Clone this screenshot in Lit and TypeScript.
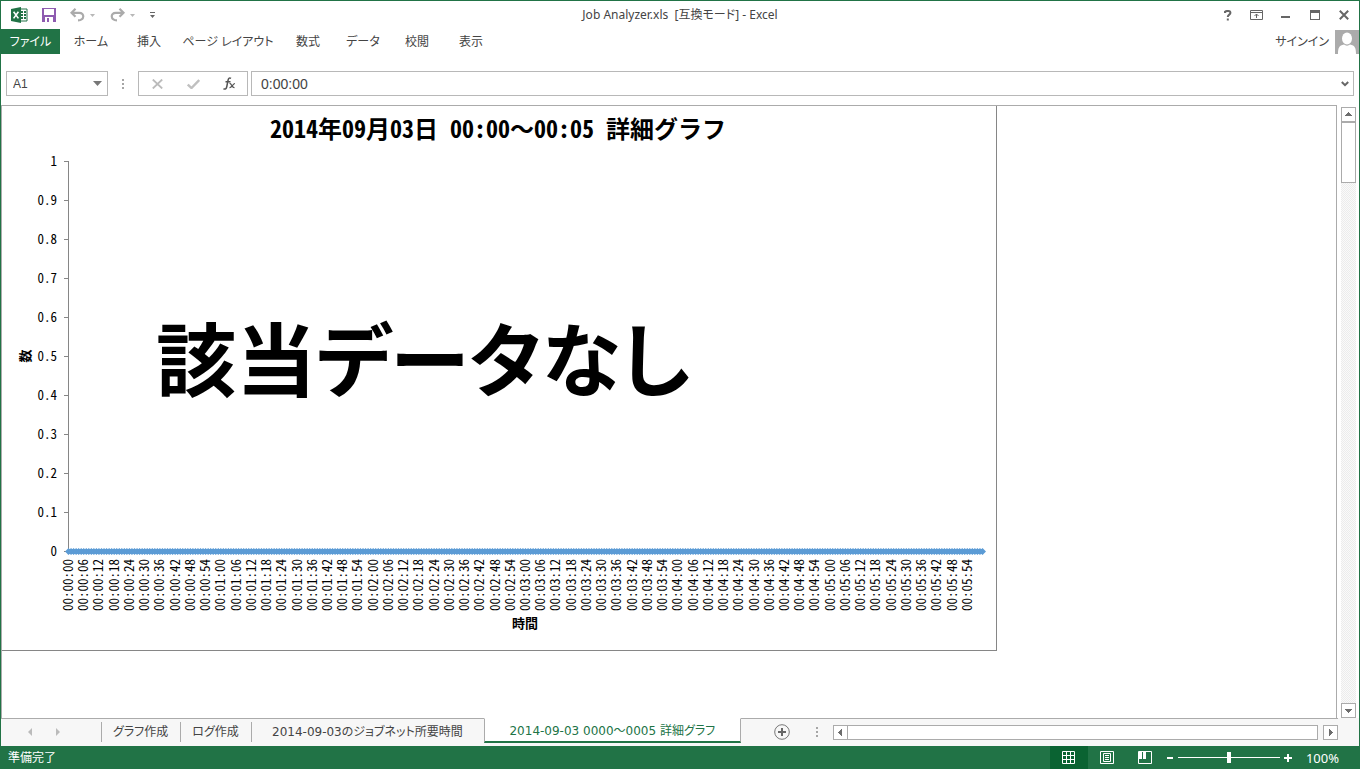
import { LitElement, html, css, svg } from "lit";
import { customElement, property, state } from "lit/decorators.js";
import { classMap } from "lit/directives/class-map.js";

const RIBBON_TABS = ["ホーム", "挿入", "ページ レイアウト", "数式", "データ", "校閲", "表示"];

const SHEETS = [
  { name: "グラフ作成", size: "small" },
  { name: "ログ作成", size: "small" },
  { name: "2014-09-03のジョブネット所要時間", size: "large" },
  { name: "2014-09-03 0000～0005 詳細グラフ", size: "large" },
];

const pad = (n: number) => String(n).padStart(2, "0");

/** Line chart of the job counts over a time range. */
@customElement("detail-chart")
class DetailChart extends LitElement {
  @property() heading = "";
  @property() message = "";

  static styles = css`
    :host {
      display: block;
      width: max-content;
      background: #fff;
      border-right: 1px solid #868686;
      border-bottom: 1px solid #868686;
    }
    svg {
      display: block;
      font-family: "Noto Sans CJK JP", sans-serif;
      fill: #000;
    }
    .title {
      font-size: 24px;
      font-weight: 700;
      font-feature-settings: "hwid";
    }
    .wide {
      font-feature-settings: normal;
    }
    .message {
      font-size: 80px;
      font-weight: 700;
      font-feature-settings: "palt";
    }
    .tick {
      font-size: 13px;
      font-feature-settings: "hwid";
    }
    .caption {
      font-size: 13px;
      font-weight: 700;
    }
    .axis {
      stroke: #868686;
      fill: none;
      shape-rendering: crispEdges;
    }
    .series {
      fill: #5b9bd5;
    }
  `;

  render() {
    const left = 66;
    const right = 980;
    const top = 55;
    const bottom = 445;
    const points = 360;
    const labels = 60;
    const step = (right - left) / labels;
    const levels = Array.from({ length: 11 }, (_, i) => i);
    const yOf = (i: number) => Math.round(bottom - ((bottom - top) * i) / 10) + 0.5;
    const ticks = levels.map((i) => `M${left - 4} ${yOf(i)}H${left + 1}`).join("");
    const diamonds = Array.from({ length: points + 1 }, (_, i) => {
      const x = left + 0.5 + ((right - left) * i) / points;
      return `M${x.toFixed(2)} ${bottom - 3}l3.5 3.5l-3.5 3.5l-3.5-3.5z`;
    }).join("");
    return html`
      <svg width="994" height="544" viewBox="0 0 994 544" role="img" aria-label=${this.heading}>
        <text class="title" x="496" y="32" text-anchor="middle">${this.heading
          .split(/(～)/)
          .map((part) => svg`<tspan class=${part === "～" ? "wide" : ""}>${part}</tspan>`)}</text>
        <path class="axis" d="M${left + 0.5} ${top}V${bottom}${ticks}" />
        ${levels.map(
          (i) => svg`<text class="tick" x="55" y=${yOf(i) + 4} text-anchor="end">${
            i === 0 ? "0" : i === 10 ? "1" : `0.${i}`
          }</text>`
        )}
        <path class="series" d=${diamonds} />
        ${Array.from({ length: labels }, (_, i) => {
          const seconds = i * 6;
          const x = Math.round(left + i * step);
          return svg`<text class="tick" transform="translate(${x + 5} 453) rotate(-90)" text-anchor="end">${
            `00:${pad(Math.floor(seconds / 60))}:${pad(seconds % 60)}`
          }</text>`;
        })}
        <text class="caption" transform="translate(28 250) rotate(-90)" text-anchor="middle">数</text>
        <text class="caption" x="523" y="522" text-anchor="middle">時間</text>
        <text class="message" x="154" y="284">${this.message}</text>
      </svg>
    `;
  }
}

@customElement("app-root")
class AppRoot extends LitElement {
  @state() private activeSheet = 3;
  @state() private view = 0;

  static styles = css`
    :host {
      display: flex;
      flex-direction: column;
      box-sizing: border-box;
      height: 100vh;
      border: 1px solid #217346;
      border-bottom: 0;
      background: #fff;
      color: #444;
      font-family: "Noto Sans", "Noto Sans CJK JP", sans-serif;
      font-size: 12px;
      line-height: 16px;
      font-feature-settings: "palt";
      overflow: hidden;
    }
    *,
    *::before {
      box-sizing: border-box;
    }
    button,
    input {
      margin: 0;
      padding: 0;
      border: 0;
      border-radius: 0;
      background: none;
      color: inherit;
      font: inherit;
      font-feature-settings: inherit;
      outline: none;
    }
    svg {
      display: block;
    }
    button {
      display: flex;
      align-items: center;
      justify-content: center;
    }

    .titlebar {
      display: grid;
      grid-template-columns: 1fr auto 1fr;
      align-items: center;
      height: 28px;
      flex: none;
    }
    .quick {
      display: flex;
      align-items: center;
      padding-left: 10px;
    }
    .quick .save {
      margin: 0 14px;
    }
    .quick .redo {
      margin: 0 14px;
    }
    .title {
      margin: 0;
      font-size: 12px;
      font-weight: 400;
      white-space: pre;
    }
    .window {
      display: flex;
      justify-content: flex-end;
      padding-right: 1px;
    }
    .window button {
      width: 29px;
      height: 28px;
    }

    .ribbon {
      display: flex;
      height: 25px;
      flex: none;
    }
    .tabs {
      display: grid;
      grid-template-columns: 59px 62px 54px 104px 56px 54px 54px 54px;
    }
    .tabs button {
      white-space: nowrap;
    }
    .tabs .file {
      background: #217346;
      color: #fff;
    }
    .account {
      display: flex;
      align-items: center;
      gap: 6px;
      margin-left: auto;
    }
    .account a {
      color: #444;
      text-decoration: none;
    }

    .formula {
      display: flex;
      align-items: center;
      height: 51px;
      padding: 8px 5px 0;
      flex: none;
      font-family: "Liberation Sans", sans-serif;
    }
    .box {
      display: flex;
      align-items: center;
      height: 25px;
      border: 1px solid #b8b8b8;
    }
    .namebox {
      width: 102px;
    }
    .namebox input {
      flex: 1;
      min-width: 0;
      padding-left: 6px;
    }
    .namebox button {
      width: 20px;
      height: 22px;
    }
    .grip {
      width: 30px;
      display: flex;
      justify-content: center;
    }
    .actions {
      width: 110px;
      margin-right: 3px;
    }
    .actions button {
      flex: 1;
      height: 22px;
    }
    .entry {
      flex: 1;
    }
    .entry input {
      flex: 1;
      min-width: 0;
      padding-left: 9px;
      font-size: 14px;
    }
    .entry button {
      width: 16px;
      height: 22px;
    }

    .work {
      display: flex;
      flex: 1;
      min-height: 0;
      background: #fff;
    }
    .sheet {
      flex: 1;
      min-width: 0;
      overflow: hidden;
      background: #fff;
      border: 1px solid #ababab;
      border-bottom: 0;
    }
    .vscroll {
      display: flex;
      flex-direction: column;
      width: 15px;
      margin: 2px 3px 0 4px;
    }
    .arrow {
      width: 15px;
      height: 15px;
      flex: none;
      background: #fff;
      border: 1px solid #ababab;
    }
    .track {
      flex: 1;
      background: repeating-conic-gradient(#ececec 0 25%, #fafafa 0 50%) 0 0 / 2px 2px;
    }
    .thumb {
      height: 61px;
      background: #fff;
      border: 1px solid #ababab;
    }

    .sheetbar {
      display: flex;
      height: 28px;
      flex: none;
      background: #f7f7f7;
    }
    .nav {
      display: flex;
      align-items: center;
      width: 100px;
      height: 26px;
      padding-left: 15px;
      border-top: 1px solid #ababab;
    }
    .nav button {
      width: 28px;
      height: 20px;
    }
    .sheets {
      display: flex;
      font-size: 12px;
    }
    .sheets button {
      height: 26px;
      position: relative;
      border-top: 1px solid #ababab;
      white-space: nowrap;
    }
    .sheets .small {
      padding: 0 12px;
    }
    .sheets .large {
      min-width: 233px;
      padding: 0 16px;
      font-family: "DejaVu Sans", "Noto Sans CJK JP", sans-serif;
    }
    .sheets .divided::before {
      content: "";
      position: absolute;
      left: 0;
      top: 3px;
      bottom: 2px;
      border-left: 1px solid #ababab;
    }
    .sheets .active {
      height: 25px;
      min-width: 257px;
      padding-top: 2px;
      background: #fff;
      color: #217346;
      border: 1px solid #ababab;
      border-top-color: #fff;
      border-bottom: 2px solid #217346;
    }
    .rest {
      display: flex;
      align-items: center;
      flex: 1;
      height: 27px;
      padding-left: 12px;
      border-top: 1px solid #ababab;
    }
    .rest .add {
      width: 58px;
      height: 26px;
    }
    .rest .grip {
      width: 12px;
    }
    .hscroll {
      display: flex;
      flex: 1;
      margin-left: 10px;
    }
    .hthumb {
      flex: 1;
      height: 15px;
      margin: 0 5px 0 0;
      background: #fff;
      border: 1px solid #ababab;
      border-left: 0;
    }
    .corner {
      width: 21px;
    }

    .status {
      display: flex;
      align-items: center;
      height: 23px;
      padding: 0 20px 0 7px;
      flex: none;
      background: #217346;
      color: #fff;
    }
    .views {
      display: flex;
      margin-left: auto;
    }
    .views button {
      width: 38px;
      height: 23px;
    }
    .views .on {
      background: #0a6332;
    }
    .zoom {
      display: flex;
      align-items: center;
      gap: 2px;
    }
    .zoom button {
      width: 12px;
      height: 20px;
    }
    .zoom input {
      appearance: none;
      width: 102px;
      height: 12px;
      background: linear-gradient(#fff, #fff) center / 100% 1px no-repeat;
    }
    .zoom input::-webkit-slider-thumb {
      appearance: none;
      width: 4px;
      height: 11px;
      background: #fff;
    }
    .percent {
      margin-left: 11px;
      width: 34px;
      font-size: 13px;
      text-align: right;
    }
  `;

  private caret(color: string) {
    return html`<svg width="9" height="5" viewBox="0 0 9 5"><path d="M0 0h9L4.500 5z" fill=${color} /></svg>`;
  }

  private grip() {
    return html`<span class="grip"
      ><svg width="2" height="10" viewBox="0 0 2 10" fill="#a6a6a6">
        <path d="M0 0h2v2H0zM0 4h2v2H0zM0 8h2v2H0z" /></svg
    ></span>`;
  }

  private arrow(label: string, d: string) {
    return html`<button class="arrow" aria-label=${label}>
      <svg width="9" height="9" viewBox="0 0 9 9" fill="#6d6d6d" shape-rendering="crispEdges"><path d=${d} /></svg>
    </button>`;
  }

  private renderTitleBar() {
    return html`
      <header class="titlebar">
        <div class="quick">
          <svg width="17" height="16" viewBox="0 0 17 16" role="img" aria-label="Excel">
            <path d="M9 2h7v12H9z" fill="#fff" stroke="#217346" />
            <path d="M10 4h2v2h-2zM13 4h2v2h-2zM10 7h2v2h-2zM13 7h2v2h-2zM10 10h2v2h-2zM13 10h2v2h-2z" fill="#217346" />
            <path d="M0 2l10-2v16L0 14z" fill="#217346" />
            <path d="M2.6 4.8l4.8 6.6M7.4 4.8l-4.8 6.6" stroke="#fff" stroke-width="1.6" />
          </svg>
          <button class="save" aria-label="上書き保存">
            <svg width="14" height="14" viewBox="0 0 14 14">
              <path d="M0 0h14v14H0z" fill="#8e5bb0" />
              <path d="M2 1h10v6H2zM3 9h8v5H3z" fill="#fff" />
              <path d="M5 10h2v4H5z" fill="#8e5bb0" />
            </svg>
          </button>
          <button aria-label="元に戻す">
            <svg width="26" height="14" viewBox="0 0 26 14">
              <path d="M5.5 0.8L1.5 4.8l4 4M2 4.8h7.2c5.6 0 5.6 7.4-1.2 7.6" fill="none" stroke="#ababab" stroke-width="2.2" />
              <path d="M20 6h5l-2.500 3z" fill="#b8b8b8" />
            </svg>
          </button>
          <button class="redo" aria-label="やり直し">
            <svg width="26" height="14" viewBox="0 0 26 14">
              <path d="M9.500 0.800l4 4-4 4M13 4.800H5.800c-5.600 0-5.600 7.400 1.200 7.600" fill="none" stroke="#ababab" stroke-width="2.2" />
              <path d="M20 6h5l-2.500 3z" fill="#b8b8b8" />
            </svg>
          </button>
          <button aria-label="クイック アクセス ツール バーのユーザー設定">
            <svg width="5" height="6" viewBox="0 0 5 6" fill="#666"><path d="M0 0h5v1H0zM0 3h5L2.500 6z" /></svg>
          </button>
        </div>
        <h1 class="title">Job Analyzer.xls  [互換モード] - Excel</h1>
        <div class="window">
          <button aria-label="ヘルプ">
            <svg width="8" height="11" viewBox="0 0 8 11">
              <path d="M1 3V1.800C2.500 0.600 6.600 0.500 6.400 3c0 1.700-2.600 1.600-2.600 4" fill="none" stroke="#666" stroke-width="2" />
              <path d="M2.800 8.500h2v2h-2z" fill="#666" />
            </svg>
          </button>
          <button aria-label="リボンの表示オプション">
            <svg width="13" height="10" viewBox="0 0 13 10" fill="none" stroke="#666">
              <path d="M.5.5h12v9H.5zM.5 2.500h12M6.500 8V4M4.500 6l2-2 2 2" />
            </svg>
          </button>
          <button aria-label="最小化">
            <svg width="9" height="10" viewBox="0 0 9 10"><path d="M0 6h9v2H0z" fill="#666" /></svg>
          </button>
          <button aria-label="最大化">
            <svg width="10" height="10" viewBox="0 0 10 10"><path d="M0 0h10v10H0zM1 3v6h8V3z" fill="#666" fill-rule="evenodd" /></svg>
          </button>
          <button aria-label="閉じる">
            <svg width="10" height="10" viewBox="0 0 10 10"><path d="M.8.8l8.400 8.400M9.200.8L.8 9.200" stroke="#666" stroke-width="2" /></svg>
          </button>
        </div>
      </header>
    `;
  }

  private renderRibbon() {
    return html`
      <nav class="ribbon">
        <div class="tabs">
          <button class="file">ファイル</button>
          ${RIBBON_TABS.map((tab) => html`<button>${tab}</button>`)}
        </div>
        <div class="account">
          <a href="#">サインイン</a>
          <svg width="24" height="24" viewBox="0 0 24 24" aria-hidden="true">
            <path d="M0 0h24v24H0z" fill="#ababab" />
            <ellipse cx="12" cy="8.500" rx="5" ry="6" fill="#fff" />
            <path d="M3 24c0-6 1-8.500 6-9.500 1.500 1.500 4.500 1.500 6 0 5 1 6 3.500 6 9.500z" fill="#fff" />
          </svg>
        </div>
      </nav>
    `;
  }

  private renderFormulaBar() {
    return html`
      <div class="formula">
        <div class="box namebox">
          <input aria-label="名前ボックス" value="A1" />
          <button aria-label="名前の一覧">${this.caret("#777")}</button>
        </div>
        ${this.grip()}
        <div class="box actions">
          <button aria-label="キャンセル">
            <svg width="11" height="10" viewBox="0 0 11 10"><path d="M.8.5l9.400 9M10.200.5l-9.400 9" stroke="#bbb" stroke-width="1.800" /></svg>
          </button>
          <button aria-label="入力">
            <svg width="13" height="10" viewBox="0 0 13 10"><path d="M.8 5.500l3.700 3.500L12.200 1" fill="none" stroke="#c0c0c0" stroke-width="2.400" /></svg>
          </button>
          <button aria-label="関数の挿入">
            <svg width="13" height="13" viewBox="0 0 13 13" fill="none" stroke="#555" stroke-width="1.500">
              <path d="M8 1.400C6.200.2 5.400 1.400 5 3.500L3.800 9.500C3.400 11.800 2.200 12.600.5 11.800M2.500 4.700h5" />
              <path d="M6.500 6.500c2-.6 2.500 4.500 5 4M12 6.500c-2 0-3.500 4.500-5.500 4" stroke-width="1.200" />
            </svg>
          </button>
        </div>
        <div class="box entry">
          <input aria-label="数式バー" value="0:00:00" />
          <button aria-label="数式バーの展開">
            <svg width="8" height="6" viewBox="0 0 8 6"><path d="M.8 1L4 4.200 7.200 1" fill="none" stroke="#666" stroke-width="2" /></svg>
          </button>
        </div>
      </div>
    `;
  }

  private renderSheetBar() {
    return html`
      <div class="sheetbar">
        <div class="nav">
          <button aria-label="前のシート"><svg width="4" height="8" viewBox="0 0 4 8"><path d="M4 0v8L0 4z" fill="#bbb" /></svg></button>
          <button aria-label="次のシート"><svg width="4" height="8" viewBox="0 0 4 8"><path d="M0 0v8l4-4z" fill="#bbb" /></svg></button>
        </div>
        <div class="sheets" role="tablist">
          ${SHEETS.map(
            (sheet, i) => html`<button
              role="tab"
              aria-selected=${i === this.activeSheet}
              class=${classMap({
                [sheet.size]: true,
                active: i === this.activeSheet,
                divided: i !== this.activeSheet,
              })}
              @click=${() => (this.activeSheet = i)}
            >
              ${sheet.name}
            </button>`
          )}
        </div>
        <div class="rest">
          <button class="add" aria-label="新しいシート">
            <svg width="16" height="16" viewBox="0 0 16 16" fill="none" stroke="#777">
              <circle cx="8" cy="8" r="7.300" />
              <path d="M8 4v8M4 8h8" stroke-width="2" stroke="#666" />
            </svg>
          </button>
          ${this.grip()}
          <div class="hscroll">
            ${this.arrow("左へスクロール", "M6 1v7L2 4.500z")}
            <div class="hthumb"></div>
            ${this.arrow("右へスクロール", "M3 1v7l4-3.500z")}
          </div>
        </div>
        <div class="corner"></div>
      </div>
    `;
  }

  private renderStatus() {
    const icons = [
      { label: "標準", d: "M.5.5h12v12H.5zM.5 4.500h12M.5 8.500h12M4.500.5v12M8.500.5v12" },
      { label: "ページ レイアウト", d: "M.5.5h13v12H.500zM3.500 2.500h7v8h-7zM5 4.500h4M5 6.500h4M5 8.500h4" },
      { label: "改ページ プレビュー", d: "M.5.5h13v12H.5zM1 2.500h3M1 4.500h3M1 6.500h3M1 1.500h3M1 3.500h3M1 5.500h3M1 7.500h3M5.500 1v7M6.500 1v7M7.500 1v7" },
    ];
    return html`
      <footer class="status">
        <span>準備完了</span>
        <div class="views">
          ${icons.map(
            (icon, i) => html`<button
              aria-label=${icon.label}
              class=${classMap({ on: this.view === i })}
              @click=${() => (this.view = i)}
            >
              <svg width="14" height="13" viewBox="0 0 14 13" fill="none" stroke="#fff"><path d=${icon.d} /></svg>
            </button>`
          )}
        </div>
        <div class="zoom">
          <button aria-label="縮小"><svg width="6" height="2" viewBox="0 0 6 2"><path d="M0 0h6v2H0z" fill="#fff" /></svg></button>
          <input type="range" min="0" max="200" value="100" aria-label="ズーム" />
          <button aria-label="拡大"><svg width="8" height="8" viewBox="0 0 8 8"><path d="M3 0h2v3h3v2H5v3H3V5H0V3h3z" fill="#fff" /></svg></button>
        </div>
        <span class="percent">100%</span>
      </footer>
    `;
  }

  render() {
    return html`
      ${this.renderTitleBar()} ${this.renderRibbon()} ${this.renderFormulaBar()}
      <main class="work">
        <div class="sheet">
          <detail-chart heading="2014年09月03日 00:00～00:05 詳細グラフ" message="該当データなし"></detail-chart>
        </div>
        <div class="vscroll">
          ${this.arrow("上へスクロール", "M1 6h7L4.500 2z")}
          <div class="track"><div class="thumb"></div></div>
          ${this.arrow("下へスクロール", "M1 3h7L4.500 7z")}
        </div>
      </main>
      ${this.renderSheetBar()} ${this.renderStatus()}
    `;
  }
}
